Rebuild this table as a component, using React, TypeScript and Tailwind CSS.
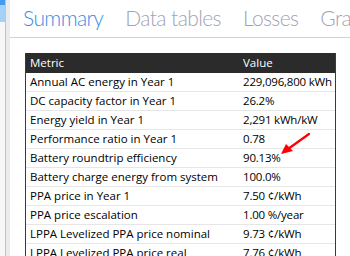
import React from "react";

const rows: [string, string][] = [
  ["Annual AC energy in Year 1", "229,096,800 kWh"],
  ["DC capacity factor in Year 1", "26.2%"],
  ["Energy yield in Year 1", "2,291 kWh/kW"],
  ["Performance ratio in Year 1", "0.78"],
  ["Battery roundtrip efficiency", "90.13%"],
  ["Battery charge energy from system", "100.0%"],
  ["PPA price in Year 1", "7.50 ¢/kWh"],
  ["PPA price escalation", "1.00 %/year"],
  ["LPPA Levelized PPA price nominal", "9.73 ¢/kWh"],
  ["LPPA Levelized PPA price real", "7.76 ¢/kWh"],
];

const tabs = ["Summary", "Data tables", "Losses", "Graphs"];

export default function App() {
  return (
    <div className="relative w-[350px] h-[256px] overflow-hidden flex bg-white">
      {/* Left strip */}
      <div className="w-[10px] shrink-0 flex">
        <div className="w-[6px] flex flex-col bg-[#f6f6f6] border-r border-[#c4c4c4]">
          <div className="h-[5px] bg-[#3f9cf0]" />
          <div className="h-[17px] bg-[#a3d1fa]" />
        </div>
        <div className="flex-1 bg-[#ebebeb]" />
      </div>

      {/* Main */}
      <div className="flex-1 flex flex-col min-w-0">
        {/* Tabs */}
        <div className="h-[38px] shrink-0 border-b border-[#d2d2d2] flex items-start pt-[4px] pl-[13px] gap-[22px] whitespace-nowrap font-['Lato',sans-serif] font-light text-[21px] leading-[28px] tracking-[-0.6px]">
          {tabs.map((t, i) => (
            <span key={t} className={i === 0 ? "shrink-0 text-[#3a8de2]" : "shrink-0 text-[#a2a2b6]"}>
              {t}
            </span>
          ))}
        </div>

        {/* Table */}
        <div className="mt-[15px] ml-[15px] w-[311px] shrink-0 border-x border-[#3a3a3a] font-['Open_Sans',sans-serif] text-[11.5px] text-black">
          <div className="h-[20px] flex items-center bg-[#2b2b2b] text-white">
            <span className="w-[213px] shrink-0 pl-[4px]">Metric</span>
            <span className="flex-1 pl-[4px]">Value</span>
          </div>
          {rows.map(([m, v]) => (
            <div key={m} className="h-[19px] flex items-center border-b border-[#e6e6e6] whitespace-nowrap">
              <span className="w-[213px] shrink-0 pl-[4px]">{m}</span>
              <span className="flex-1 pl-[4px] tracking-[-0.2px]">{v}</span>
            </div>
          ))}
        </div>
      </div>

      {/* Red arrow annotation */}
      <svg className="absolute left-[276px] top-[130px]" width="40" height="30" viewBox="0 0 40 30">
        <line x1="33" y1="4" x2="12" y2="19" stroke="#ff0000" strokeWidth="2.2" strokeLinecap="round" />
        <polygon points="5,24 10,14 17,21" fill="#ff0000" />
      </svg>
    </div>
  );
}
